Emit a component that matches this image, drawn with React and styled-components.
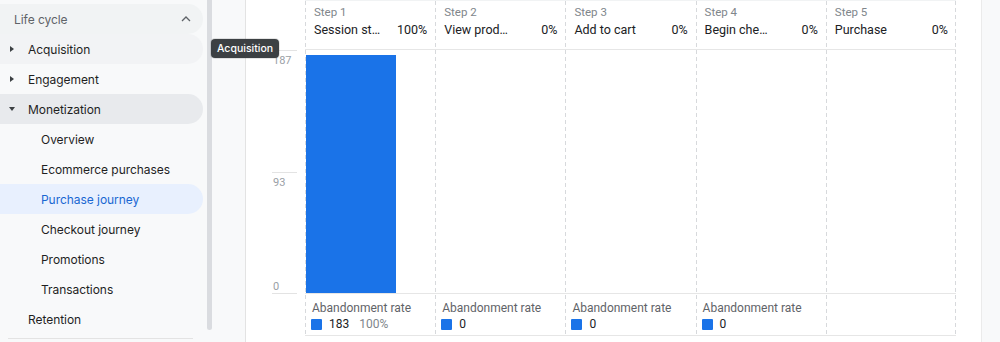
import React from 'react';
import styled, { createGlobalStyle } from 'styled-components';

const Global = createGlobalStyle`
  html, body { margin: 0; padding: 0; background: #f8f9fa; }
  body { font-family: Roboto, "Liberation Sans", sans-serif; color: #202124; }
  * { box-sizing: border-box; }
`;

const Page = styled.div`
  position: relative;
  display: flex;
  width: 1000px;
  height: 342px;
  overflow: hidden;
  background: #f8f9fa;
`;

const Sidebar = styled.nav`
  flex: none;
  width: 205px;
  padding-top: 4px;
  display: flex;
  flex-direction: column;
  font-family: Inter, Roboto, sans-serif;
  font-size: 12px;
  letter-spacing: -0.05px;
`;

const rowBg = {
  header: '#f1f3f4',
  hover: '#f2f3f5',
  open: '#e8eaed',
  active: '#e8f0fe',
  none: 'transparent',
};

const Row = styled.div`
  height: 30px;
  flex: none;
  display: flex;
  align-items: center;
  margin-right: 2px;
  padding-left: ${(p) => p.$indent}px;
  padding-right: 12px;
  border-radius: 0 15px 15px 0;
  background: ${(p) => rowBg[p.$state || 'none']};
  color: ${(p) => (p.$state === 'active' ? '#1967d2' : p.$state === 'header' ? '#5f6368' : '#1f1f1f')};
`;

const Label = styled.span`
  flex: 1;
  white-space: nowrap;
`;

const CaretBox = styled.span`
  width: 20px;
  flex: none;
  display: flex;
  align-items: center;
`;

const Caret = styled.span`
  width: 0;
  height: 0;
  ${(p) =>
    p.$down
      ? `border-left: 3.5px solid transparent; border-right: 3.5px solid transparent; border-top: 4px solid #3c4043; margin-left: 1px;`
      : `border-top: 3.5px solid transparent; border-bottom: 3.5px solid transparent; border-left: 4px solid #3c4043; margin-left: 2px;`}
`;

const Divider = styled.div`
  margin: 4px 0 0 8px;
  width: 185px;
  height: 1px;
  background: #e3e3e3;
`;

const ScrollTrack = styled.div`
  flex: none;
  width: 8px;
  padding-left: 2px;
`;

const Thumb = styled.div`
  width: 5px;
  height: 330px;
  border-radius: 0 0 3px 3px;
  background: #dadce0;
`;

const Gutter = styled.div`
  flex: none;
  width: 32px;
`;

const Card = styled.section`
  flex: none;
  width: 737px;
  height: 342px;
  display: flex;
  background: #fff;
  border-left: 1px solid #e3e3e3;
  border-right: 1px solid #ebebeb;
  padding-right: 25px;
`;

const Axis = styled.div`
  flex: none;
  width: 59px;
  display: flex;
  flex-direction: column;
`;

const AxisHead = styled.div`
  height: 50px;
  flex: none;
`;

const AxisPlot = styled.div`
  position: relative;
  height: 243px;
  flex: none;
`;

const Tick = styled.div`
  position: absolute;
  left: 26px;
  width: 25px;
  height: 1px;
  background: #e3e3e3;
`;

const TickLabel = styled.span`
  position: absolute;
  left: 27px;
  font-size: 11px;
  line-height: 12px;
  color: #9aa0a6;
`;

const Columns = styled.div`
  flex: 1;
  display: grid;
  grid-template-columns: repeat(5, 1fr);
  height: 336px;
  border-top: 1px solid #f1f3f4;
`;

const dash = (pos) =>
  `repeating-linear-gradient(to bottom, #d7d9dc 0 4px, transparent 4px 7px) ${pos} top / 1px 100% no-repeat`;

const Column = styled.div`
  display: flex;
  flex-direction: column;
  min-width: 0;
  background: ${(p) => (p.$last ? `${dash('left')}, ${dash('right')}` : dash('left'))};
`;

const Head = styled.div`
  height: 49px;
  flex: none;
  padding: 4px 8px 0 9px;
  border-bottom: 1px solid #e6e6e6;
`;

const StepNo = styled.div`
  font-size: 11.5px;
  line-height: 14px;
  color: #80868b;
`;

const StepTitle = styled.div`
  display: flex;
  justify-content: space-between;
  margin-top: 2px;
  font-size: 12.5px;
  line-height: 18px;
  color: #202124;
  white-space: nowrap;
`;

const Plot = styled.div`
  height: 243px;
  flex: none;
  display: flex;
  align-items: flex-end;
  padding-left: 1px;
`;

const Bar = styled.div`
  width: 90px;
  background: #1a73e8;
`;

const Foot = styled.div`
  height: 43px;
  flex: none;
  padding: 6px 8px 0 7px;
  border-top: 1px solid #e6e6e6;
  border-bottom: 1px solid #e6e6e6;
`;

const FootLabel = styled.div`
  font-size: 12px;
  line-height: 16px;
  color: #5f6368;
  white-space: nowrap;
`;

const Legend = styled.div`
  display: flex;
  align-items: center;
  height: 16px;
  font-size: 12px;
  color: #202124;
`;

const Swatch = styled.span`
  width: 11px;
  height: 11px;
  margin: 0 7px 0 -1px;
  background: #1a73e8;
  border-radius: 1px;
`;

const Pct = styled.span`
  margin-left: 10px;
  color: #80868b;
`;

const Tooltip = styled.div`
  position: absolute;
  left: 211px;
  top: 39px;
  height: 19px;
  padding: 0 6px;
  display: flex;
  align-items: center;
  background: #3c4043;
  color: #fff;
  border-radius: 4px;
  font-family: Inter, Roboto, sans-serif;
  font-size: 10.5px;
  font-weight: 500;
  box-shadow: 0 0 0 1px rgba(0,0,0,0.1);
`;

const nav = [
  { label: 'Acquisition', caret: 'right', state: 'hover', indent: 8 },
  { label: 'Engagement', caret: 'right', indent: 8 },
  { label: 'Monetization', caret: 'down', state: 'open', indent: 8 },
  { label: 'Overview', indent: 41 },
  { label: 'Ecommerce purchases', indent: 41 },
  { label: 'Purchase journey', indent: 41, state: 'active' },
  { label: 'Checkout journey', indent: 41 },
  { label: 'Promotions', indent: 41 },
  { label: 'Transactions', indent: 41 },
  { label: 'Retention', indent: 28 },
];

const steps = [
  { no: 'Step 1', name: 'Session st…', pct: '100%', value: 183, rate: '100%' },
  { no: 'Step 2', name: 'View prod…', pct: '0%', value: 0 },
  { no: 'Step 3', name: 'Add to cart', pct: '0%', value: 0 },
  { no: 'Step 4', name: 'Begin che…', pct: '0%', value: 0 },
  { no: 'Step 5', name: 'Purchase', pct: '0%', value: null },
];

const MAX = 187;
const PLOT_H = 243;

export default function App() {
  return (
    <>
      <Global />
      <Page>
        <Sidebar>
          <Row $indent={14} $state="header">
            <Label>Life cycle</Label>
            <svg width="10" height="6" viewBox="0 0 10 6">
              <polyline points="1,5 5,1 9,5" fill="none" stroke="#5f6368" strokeWidth="1.3" />
            </svg>
          </Row>
          {nav.map((n) => (
            <Row key={n.label} $indent={n.indent} $state={n.state}>
              {n.caret && (
                <CaretBox>
                  <Caret $down={n.caret === 'down'} />
                </CaretBox>
              )}
              <Label>{n.label}</Label>
            </Row>
          ))}
          <Divider />
        </Sidebar>
        <ScrollTrack>
          <Thumb />
        </ScrollTrack>
        <Gutter />
        <Card>
          <Axis>
            <AxisHead />
            <AxisPlot>
              <Tick style={{ top: 0 }} />
              <TickLabel style={{ top: 5 }}>187</TickLabel>
              <Tick style={{ top: PLOT_H / 2 }} />
              <TickLabel style={{ top: PLOT_H / 2 + 5 }}>93</TickLabel>
              <Tick style={{ top: PLOT_H }} />
              <TickLabel style={{ top: PLOT_H - 12 }}>0</TickLabel>
            </AxisPlot>
          </Axis>
          <Columns>
            {steps.map((s, i) => (
              <Column key={s.no} $last={i === steps.length - 1}>
                <Head>
                  <StepNo>{s.no}</StepNo>
                  <StepTitle>
                    <span>{s.name}</span>
                    <span>{s.pct}</span>
                  </StepTitle>
                </Head>
                <Plot>
                  {s.value > 0 && <Bar style={{ height: (s.value / MAX) * PLOT_H }} />}
                </Plot>
                <Foot>
                  {s.value !== null && (
                    <>
                      <FootLabel>Abandonment rate</FootLabel>
                      <Legend>
                        <Swatch />
                        <span>{s.value}</span>
                        {s.rate && <Pct>{s.rate}</Pct>}
                      </Legend>
                    </>
                  )}
                </Foot>
              </Column>
            ))}
          </Columns>
        </Card>
        <Tooltip>Acquisition</Tooltip>
      </Page>
    </>
  );
}
